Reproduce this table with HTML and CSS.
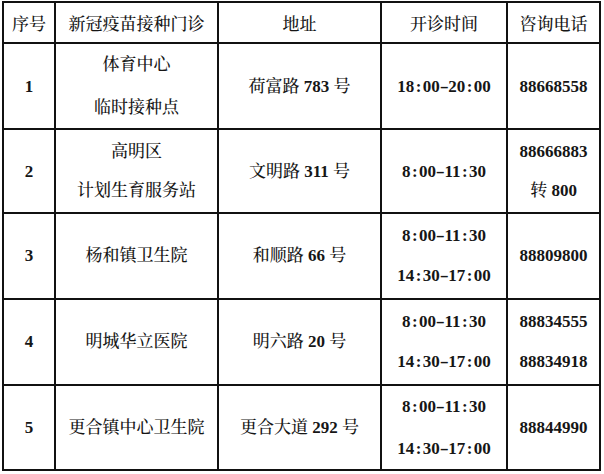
FILE: index.html
```html
<!DOCTYPE html>
<html lang="zh-CN">
<head>
<meta charset="utf-8">
<title>新冠疫苗接种门诊</title>
<link rel="stylesheet" href="styles.css">
</head>
<body>
<div class="table">
  <div class="row head">
    <div class="cell">序号</div>
    <div class="cell">新冠疫苗接种门诊</div>
    <div class="cell">地址</div>
    <div class="cell">开诊时间</div>
    <div class="cell">咨询电话</div>
  </div>
  <div class="row r1">
    <div class="cell n">1</div>
    <div class="cell"><div><div>体育中心</div><div>临时接种点</div></div></div>
    <div class="cell">荷富路<span class="n"> 783 </span>号</div>
    <div class="cell n">18<span class="sep">:</span>00<span class="sep dash">-</span>20<span class="sep">:</span>00</div>
    <div class="cell n">88668558</div>
  </div>
  <div class="row r2">
    <div class="cell n">2</div>
    <div class="cell"><div><div>高明区</div><div>计划生育服务站</div></div></div>
    <div class="cell">文明路<span class="n"> 311 </span>号</div>
    <div class="cell n">8<span class="sep">:</span>00<span class="sep dash">-</span>11<span class="sep">:</span>30</div>
    <div class="cell"><div><div class="n">88666883</div><div>转<span class="n"> 800</span></div></div></div>
  </div>
  <div class="row r3">
    <div class="cell n">3</div>
    <div class="cell">杨和镇卫生院</div>
    <div class="cell">和顺路<span class="n"> 66 </span>号</div>
    <div class="cell n"><div><div>8<span class="sep">:</span>00<span class="sep dash">-</span>11<span class="sep">:</span>30</div><div>14<span class="sep">:</span>30<span class="sep dash">-</span>17<span class="sep">:</span>00</div></div></div>
    <div class="cell n">88809800</div>
  </div>
  <div class="row r4">
    <div class="cell n">4</div>
    <div class="cell">明城华立医院</div>
    <div class="cell">明六路<span class="n"> 20 </span>号</div>
    <div class="cell n"><div><div>8<span class="sep">:</span>00<span class="sep dash">-</span>11<span class="sep">:</span>30</div><div>14<span class="sep">:</span>30<span class="sep dash">-</span>17<span class="sep">:</span>00</div></div></div>
    <div class="cell n"><div><div>88834555</div><div>88834918</div></div></div>
  </div>
  <div class="row r5">
    <div class="cell n">5</div>
    <div class="cell">更合镇中心卫生院</div>
    <div class="cell">更合大道<span class="n"> 292 </span>号</div>
    <div class="cell n"><div><div>8<span class="sep">:</span>00<span class="sep dash">-</span>11<span class="sep">:</span>30</div><div>14<span class="sep">:</span>30<span class="sep dash">-</span>17<span class="sep">:</span>00</div></div></div>
    <div class="cell n">88844990</div>
  </div>
</div>
</body>
</html>
```

FILE: styles.css
```css
html, body {
  margin: 0;
  padding: 0;
  background: #fff;
}

body {
  font-family: "Liberation Serif", "Noto Serif CJK SC", "Noto Sans CJK SC", serif;
  font-size: 17px;
  font-weight: 500;
  color: #161616;
}

.n {
  font-weight: bold;
  white-space: pre;
}

.table {
  display: grid;
  grid-template-columns: 50px 161px 161px 124px 91px;
  grid-template-rows: 39px 84px 82px 84px 84px 83px;
  gap: 2px;
  padding: 2px;
  background: #111;
  width: max-content;
  margin: 1px 0 0 2px;
}

.row {
  display: contents;
}

.cell {
  background: #fff;
  display: flex;
  align-items: center;
  justify-content: center;
  text-align: center;
  white-space: nowrap;
}

.r1 { line-height: 43px; }
.r2 { line-height: 39px; }
.r3 { line-height: 40px; }
.r4 { line-height: 40px; }
.r5 { line-height: 42px; }

.sep {
  display: inline-block;
  width: 0.5em;
  text-align: center;
}

.dash {
  transform: scaleX(1.6);
}
```
